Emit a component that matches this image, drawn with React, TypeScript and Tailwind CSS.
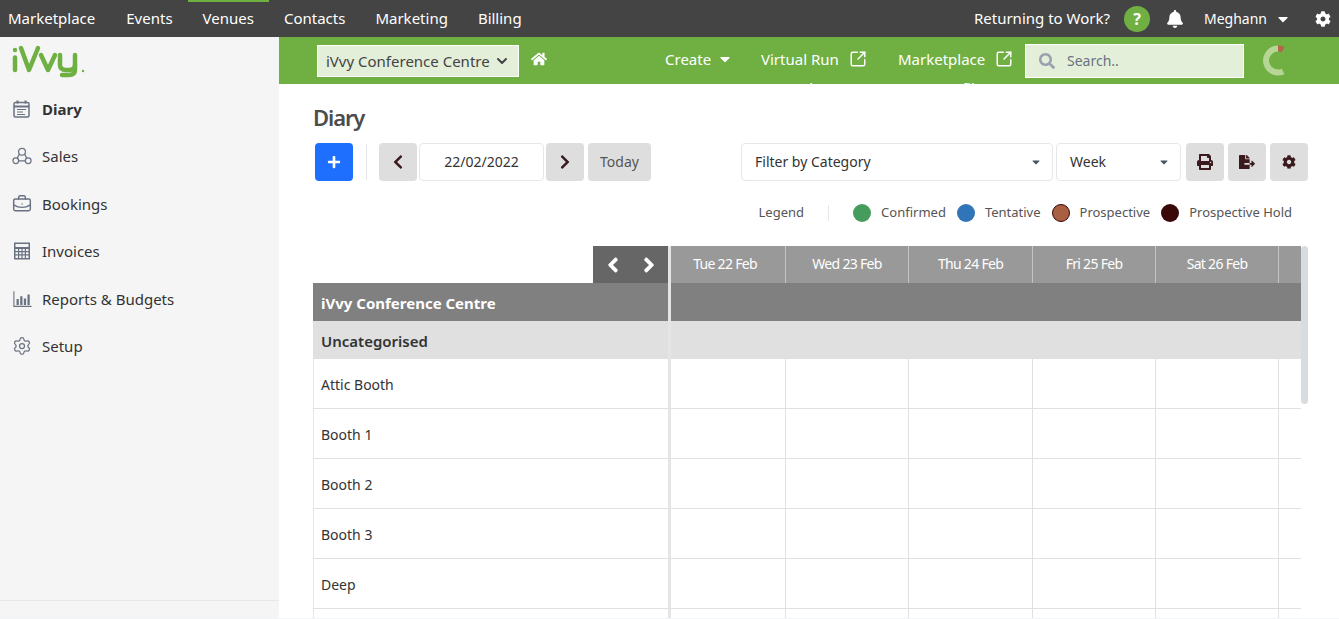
import React from "react";
import { FaBell, FaCaretDown, FaChevronLeft, FaChevronRight, FaCog, FaFileExport, FaHome, FaPlus, FaPrint, FaSearch, FaAngleLeft, FaAngleRight } from "react-icons/fa";
import { ChevronDown, SquareArrowOutUpRight, BriefcaseBusiness, Settings } from "lucide-react";

function Logo() {
  return (
    <svg width="76" height="34" viewBox="0 0 76 34" fill="none" stroke="#6fb043" strokeLinecap="round" strokeLinejoin="round">
      <path d="M3 12.5V25" strokeWidth="4.5" />
      <circle cx="3" cy="5" r="2.2" fill="#6fb043" stroke="none" />
      <path d="M9 3L17 25L26 3" strokeWidth="4.5" />
      <path d="M29 10L36 25L43 10" strokeWidth="4.5" />
      <path d="M48 10V20Q48 25 54 25H57Q63 25 63 20V10" strokeWidth="4.5" />
      <path d="M63 20V25Q63 30 57 30H50" strokeWidth="4.5" />
      <circle cx="71" cy="26" r="1.2" fill="#6fb043" stroke="none" />
    </svg>
  );
}

const iconClass = "w-5 h-5 text-gray-500";

function DiaryIcon() {
  return (
    <svg viewBox="0 0 20 20" className={iconClass} fill="none" stroke="currentColor" strokeWidth="1.5">
      <rect x="2" y="3.5" width="15" height="14.5" rx="1.5" />
      <path d="M2 7.5H17" strokeWidth="2" />
      <path d="M5.5 1.5V4.5M13.5 1.5V4.5" strokeWidth="2" />
      <path d="M5 10.5H14M5 13H11M5 15.5H13" strokeWidth="1" />
    </svg>
  );
}
function SalesIcon() {
  return (
    <svg viewBox="0 0 21 20" className="w-6 h-6 text-gray-500" fill="none" stroke="currentColor" strokeWidth="1.3">
      <circle cx="10.5" cy="5.5" r="3.6" />
      <circle cx="4" cy="15" r="3" />
      <circle cx="17" cy="15" r="3" />
      <path d="M7 15H14M7.8 8L5.4 12.3M13.2 8L15.6 12.3" />
    </svg>
  );
}
function CalcIcon() {
  return (
    <svg viewBox="0 0 20 20" className={iconClass} fill="currentColor">
      <path fillRule="evenodd" d="M2 1.5H18V18.5H2ZM3.5 3V6H16.5V3ZM3.5 8V10H6V8ZM7.2 8V10H9.4V8ZM10.6 8V10H12.8V8ZM14 8V10H16.5V8ZM3.5 11.2V13.2H6V11.2ZM7.2 11.2V13.2H9.4V11.2ZM10.6 11.2V13.2H12.8V11.2ZM14 11.2V13.2H16.5V11.2ZM3.5 14.4V17H6V14.4ZM7.2 14.4V17H9.4V14.4ZM10.6 14.4V17H12.8V14.4ZM14 14.4V17H16.5V14.4Z" />
    </svg>
  );
}
function ChartIcon() {
  return (
    <svg viewBox="0 0 22 20" className="w-6 h-5 text-gray-500" fill="currentColor">
      <path d="M1.5 1.5H2.7V17.5H21.5V18.7H1.5Z" />
      <path d="M5 10H7.5V16.5H5ZM9 7H11.5V16.5H9ZM13 9.5H15.5V16.5H13ZM17 5H19.5V16.5H17Z" />
    </svg>
  );
}

const sideItems = [
  { label: "Sales", icon: <SalesIcon /> },
  { label: "Bookings", icon: <BriefcaseBusiness className={iconClass} strokeWidth={1.75} /> },
  { label: "Invoices", icon: <CalcIcon /> },
  { label: "Reports & Budgets", icon: <ChartIcon /> },
  { label: "Setup", icon: <Settings className={iconClass} strokeWidth={1.5} /> },
];

const topNav = ["Marketplace", "Events", "Venues", "Contacts", "Marketing", "Billing"];
const days = ["Tue 22 Feb", "Wed 23 Feb", "Thu 24 Feb", "Fri 25 Feb", "Sat 26 Feb", ""];
const rooms = ["Attic Booth", "Booth 1", "Booth 2", "Booth 3", "Deep", ""];
const colTemplate = "grid grid-cols-[115px_123px_124px_123px_123px_1fr] h-full";

const legend = [
  { label: "Confirmed", dot: "bg-[#459c5c]" },
  { label: "Tentative", dot: "bg-[#2f75b8]" },
  { label: "Prospective", dot: "bg-[#a85f42] border border-[#3a0808]" },
  { label: "Prospective Hold", dot: "bg-[#3a0808]" },
];

function GreyButton({ children, wide }: { children: React.ReactNode; wide?: boolean }) {
  return (
    <div className={`h-9.5 ${wide ? "px-3 text-[#555]" : "w-9.5 text-[#3a1a1c]"} flex items-center justify-center rounded bg-[#dedede]`}>
      {children}
    </div>
  );
}

export default function App() {
  return (
    <div className="h-screen overflow-hidden bg-white flex flex-col text-[#333] border-b border-gray-100" style={{ fontFamily: '"Noto Sans", sans-serif' }}>
      <header className="h-[37px] shrink-0 bg-[#444444] text-white flex items-stretch justify-between text-[15px]">
        <nav className="flex">
          {topNav.map((n, i) => (
            <div key={n} className={`${i === 0 ? "pl-2 pr-4" : "px-[15px]"} pb-0.5 flex items-center border-t-2 ${n === "Venues" ? "border-[#70b043]" : "border-transparent"}`}>
              {n}
            </div>
          ))}
        </nav>
        <div className="flex items-center pr-2">
          <span>Returning to Work?</span>
          <span className="ml-3.5 w-6.5 h-6.5 rounded-full bg-[#70b043] flex items-center justify-center font-bold text-base">?</span>
          <FaBell className="ml-4 w-4.5 h-4.5" />
          <span className="ml-5 text-sm">Meghann</span>
          <FaCaretDown className="ml-2 w-4 h-4" />
          <FaCog className="ml-6 w-4 h-4" />
        </div>
      </header>

      <div className="flex-1 flex min-h-0">
        <aside className="w-[279px] shrink-0 bg-[#f5f5f5] flex flex-col">
          <div className="h-[47px] pl-3 pt-2"><Logo /></div>
          <ul className="flex-1 text-[15px]">
            <li className="h-[47.5px] flex items-center pl-3 gap-2.5 mt-px font-bold text-[#333]">
              <DiaryIcon /> Diary
            </li>
            {sideItems.map((s) => (
              <li key={s.label} className="h-[47.5px] flex items-center pl-3 gap-2.5 text-[#333]">
                <span className="w-5 flex justify-center">{s.icon}</span> {s.label}
              </li>
            ))}
          </ul>
          <div className="h-[18px] border-t border-gray-200" />
        </aside>

        <main className="flex-1 min-w-0 flex flex-col">
          <div className="h-[47px] shrink-0 bg-[#70b043] flex overflow-hidden text-white text-[15px]">
            <div className="ml-[38px] mt-[8px] h-8 w-[202px] border border-white bg-[#e3efd9] flex items-center justify-between px-2 text-[#444]">
              <span>iVvy Conference Centre</span>
              <ChevronDown className="w-4 h-4 shrink-0" strokeWidth={3} />
            </div>
            <FaHome className="ml-3 mt-[14px] w-4 h-4" />
            <div className="ml-[118px] w-[96px] leading-7 pt-2">
              <div className="flex items-center gap-1.5">Create <FaCaretDown className="w-4 h-4" /></div>
              <div className="pl-4 mt-px">Manage</div>
            </div>
            <div className="w-[137px] leading-7 pt-2">
              <div className="flex items-center gap-2.5">Virtual Run <SquareArrowOutUpRight className="w-4.5 h-4.5" /></div>
              <div className="pl-10 mt-px">Sheets</div>
            </div>
            <div className="w-[127px] leading-7 pt-2">
              <div className="flex items-center gap-2.5">Marketplace <SquareArrowOutUpRight className="w-4.5 h-4.5" /></div>
              <div className="pl-10 mt-px">Profile</div>
            </div>
            <div className="mt-[7px] h-[34px] w-[219px] border border-white bg-[#e3efd9] flex items-center pl-3.25 gap-3 text-sm text-gray-500">
              <FaSearch className="w-4 h-4 text-gray-400" /> Search..
            </div>
            <svg viewBox="0 0 26 32" className="ml-[19px] mt-2 w-[26px] h-[32px]" fill="none">
              <path d="M15 3.5A12 12 0 1 0 20.1 26.4" stroke="#b5d694" strokeWidth="6" />
              <path d="M15 3.5A12 12 0 0 1 20.1 4.6" stroke="#b5654a" strokeWidth="6" />
            </svg>
          </div>

          <div className="flex-1 min-h-0 pl-8 pr-[31px]">
            <h1 className="text-[22px] font-semibold tracking-tighter text-[#4d4d4d] mt-[19px] ml-0.5 leading-7">Diary</h1>

            <div className="flex items-center mt-3 text-sm">
              <div className="ml-1 w-9.5 h-9.5 rounded bg-[#1f6fff] flex items-center justify-center text-white">
                <FaPlus className="w-3.5 h-3.5" />
              </div>
              <div className="ml-3.25 mr-3 w-px h-9 bg-gray-200" />
              <GreyButton><FaChevronLeft className="w-4 h-4" /></GreyButton>
              <div className="mx-0.5 w-[125px] h-9.5 rounded border border-gray-200 flex items-center justify-center">22/02/2022</div>
              <GreyButton><FaChevronRight className="w-4 h-4" /></GreyButton>
              <div className="ml-1"><GreyButton wide>Today</GreyButton></div>
              <div className="flex-1" />
              <div className="w-[312px] h-9.5 rounded border border-gray-200 flex items-center justify-between pl-3.25 pr-2.5">
                Filter by Category <FaCaretDown className="w-3 h-3 text-gray-600" />
              </div>
              <div className="ml-0.75 mr-1.25 w-[125px] h-9.5 rounded border border-gray-200 flex items-center justify-between pl-3.25 pr-2.5">
                Week <FaCaretDown className="w-3 h-3 text-gray-600" />
              </div>
              <div className="flex gap-1">
                <GreyButton><FaPrint className="w-4 h-4" /></GreyButton>
                <GreyButton><FaFileExport className="w-4 h-4" /></GreyButton>
                <GreyButton><FaCog className="w-3.5 h-3.5" /></GreyButton>
              </div>
            </div>

            <div className="flex items-center justify-end mt-5 h-6 text-[13px] text-[#555] pr-4">
              <span>Legend</span>
              <span className="mx-6 w-px h-4 bg-gray-200" />
              <div className="flex items-center gap-2.75">
                {legend.map((l) => (
                  <span key={l.label} className="flex items-center">
                    <span className={`w-4.5 h-4.5 rounded-full mr-2.5 ${l.dot}`} />
                    {l.label}
                  </span>
                ))}
              </div>
            </div>

            <div className="flex mt-[21px] ml-0.5">
              <div className="w-[988px] shrink-0 text-sm">
                <div className="flex h-[37px]">
                  <div className="w-[358px] border-r-3 border-[#e5e5e5] flex justify-end">
                    <div className="w-[75px] bg-[#666666] text-white flex items-center justify-center gap-3">
                      <FaAngleLeft className="w-6 h-6" />
                      <FaAngleRight className="w-6 h-6" />
                    </div>
                  </div>
                  <div className={`flex-1 bg-[#999999] text-white tracking-tighter ${colTemplate}`}>
                    {days.map((d, i) => (
                      <div key={i} className="flex items-center justify-center pb-0.5 first:pr-1.5 border-r border-[#c4c4c4] last:border-r-0">{d}</div>
                    ))}
                  </div>
                </div>
                <div className="flex h-[38px] bg-[#808080] text-white font-bold text-[15px]">
                  <div className="w-[358px] border-r-3 border-[#e5e5e5] flex items-center pl-2 pt-1">iVvy Conference Centre</div>
                </div>
                <div className="flex h-[38px] bg-[#e0e0e0] font-semibold text-[15px] text-[#333]">
                  <div className="w-[358px] border-r-3 border-[#e5e5e5] flex items-center pl-2 pt-1">Uncategorised</div>
                </div>
                {rooms.map((r, idx) => (
                  <div key={idx} className="flex h-[50px] border-b border-[#e0e0e0]">
                    <div className="w-[358px] border-l border-r-3 border-[#e5e5e5] flex items-center pl-[7px] pt-0.5">{r}</div>
                    <div className={`flex-1 ${colTemplate}`}>
                      {days.map((d, i) => (
                        <div key={i} className="border-r border-[#e0e0e0] last:border-r-0" />
                      ))}
                    </div>
                  </div>
                ))}
              </div>
              <div className="w-2.5 h-[158px] rounded-md bg-[#d9dcdf]" />
            </div>
          </div>
        </main>
      </div>
    </div>
  );
}
